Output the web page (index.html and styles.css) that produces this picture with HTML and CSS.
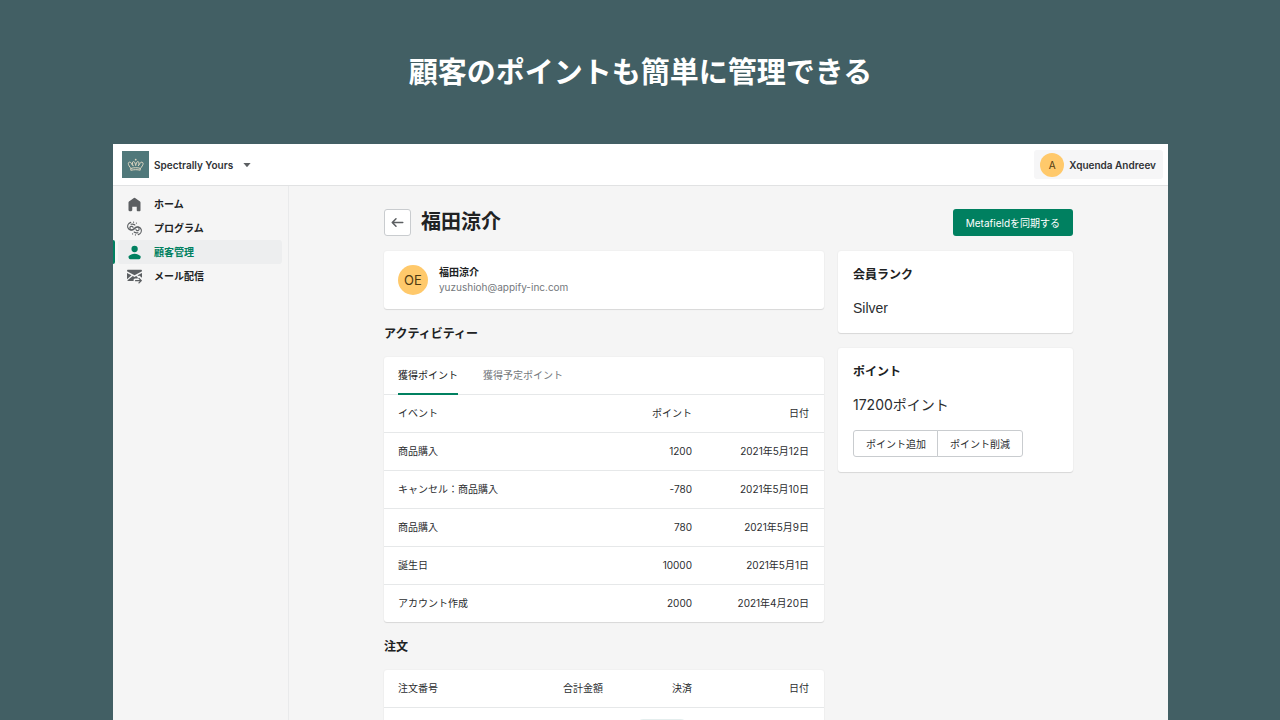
FILE: index.html
```html
<!DOCTYPE html>
<html lang="ja">
<head>
<meta charset="utf-8">
<title>顧客のポイントも簡単に管理できる</title>
<link rel="stylesheet" href="styles.css">
</head>
<body>
<div class="page">
  <h1 class="headline">顧客のポイントも簡単に管理できる</h1>
  <div class="window">
    <header class="topbar">
      <button class="shop" type="button">
        <svg class="shop-logo" viewBox="0 0 27 27" aria-hidden="true">
          <rect width="27" height="27" fill="#50787a"/>
          <g fill="none" stroke="#ddd6c1" stroke-width="1" stroke-linejoin="round" stroke-linecap="round">
            <path d="M9 17.500C7.500 15.500 6.300 14 6.300 12.600c0-1.800 2.300-2 3-.4.500 1.200.8 1.900 1.700 2.400M18.400 17.500c1.500-2 2.700-3.500 2.700-4.900 0-1.800-2.300-2-3-.4-.5 1.200-.8 1.900-1.700 2.400"/>
            <path d="M11 14.600c-1-2-.8-4 .5-4 1.400 0 1.700 2 2.200 4 .5-2 .8-4 2.200-4 1.300 0 1.500 2 .5 4"/>
            <path d="M9.200 17.300c2.800-.8 6.200-.8 9 0v1.900c-2.800-.7-6.200-.7-9 0z"/>
          </g>
          <g fill="#ddd6c1"><circle cx="13.700" cy="8.700" r=".9"/></g>
        </svg>
        <span>Spectrally Yours</span>
        <svg class="caret" viewBox="0 0 8 4" aria-hidden="true"><path d="M.4 0h7.200L4.400 3.700a.6.6 0 0 1-.8 0z" fill="#5c5f62"/></svg>
      </button>
      <button class="user" type="button">
        <span class="avatar avatar-small">A</span>
        <span>Xquenda Andreev</span>
      </button>
    </header>
    <div class="body">
      <nav class="sidebar">
        <a class="nav-item" href="#home">
          <svg class="icon" viewBox="0 0 20 20" aria-hidden="true"><path d="M18 7.261V17.500c0 .841-.672 1.500-1.500 1.500h-2c-.828 0-1.500-.659-1.500-1.500V13H7v4.477C7 18.318 6.328 19 5.500 19h-2c-.828 0-1.500-.682-1.500-1.523V7.261a1.500 1.500 0 0 1 .615-1.210l6.590-4.820a1.481 1.481 0 0 1 1.590 0l6.590 4.820A1.500 1.500 0 0 1 18 7.260z"/></svg>
          <span>ホーム</span>
        </a>
        <a class="nav-item" href="#program">
          <svg class="icon" viewBox="0 0 20 20" aria-hidden="true">
            <g fill="none" stroke="currentColor" stroke-width="1.500" stroke-linecap="round">
              <path d="M5 1.800C1.800 3 .2 6.200 1.200 9c1.300 3.600 5.800 4.400 8.300 1.800 1.600-1.700 3-3 5-2.400 2.200.7 2.300 3.700.2 4.400-1.400.4-2.600-.4-2.800-1.500"/>
              <path d="M15 18.200c3.200-1.200 4.800-4.400 3.800-7.200-1.300-3.600-5.800-4.400-8.300-1.800-1.600 1.700-3 3-5 2.400-2.200-.7-2.300-3.700-.2-4.400 1.400-.4 2.600.4 2.800 1.500"/>
              <path d="M5.500 4.400c1.800-.6 3.600-.3 5 .9M14.500 15.600c-1.800.6-3.600.3-5-.9"/>
              <path d="M8.700 1.500h.1M12.500 2.800h.1M11.200 18.500h.1M7.400 17.200h.1"/>
            </g>
          </svg>
          <span>プログラム</span>
        </a>
        <a class="nav-item is-active" href="#customers" aria-current="page">
          <svg class="icon" viewBox="0 0 20 20" aria-hidden="true"><path d="M14.363 5.220a4.220 4.220 0 1 1-8.439 0 4.220 4.220 0 0 1 8.439 0zM2.670 14.469c1.385-1.090 4.141-2.853 7.474-2.853 3.332 0 6.089 1.764 7.474 2.853.618.486.81 1.308.567 2.056l-.333 1.020A2.110 2.110 0 0 1 15.846 19H4.441a2.110 2.110 0 0 1-2.005-1.455l-.333-1.020c-.245-.748-.052-1.570.567-2.056z"/></svg>
          <span>顧客管理</span>
        </a>
        <a class="nav-item" href="#mail">
          <svg class="icon" viewBox="0 0 20 20" aria-hidden="true">
            <path d="M0 2.500C0 1.700.7 1 1.500 1h17c.8 0 1.500.7 1.500 1.500v.4L10 8.300 0 2.900z"/>
            <path d="M0 5.200l6 3.200-6 5.400zM7.700 9.300l2.300 1.200 2.300-1.200 2 1.700v1.500h-3.500c-1.300 0-2 1-2 2V16H1.500c-.5 0-.9-.2-1.200-.6zM20 5.200v6.300l-2.500-2c-.8-.6-1.800-.6-2.500-.1l-1-1z"/>
            <path d="M11.500 15.500h7M16 12.500l3 3-3 3" fill="none" stroke="currentColor" stroke-width="1.800" stroke-linecap="round" stroke-linejoin="round"/>
          </svg>
          <span>メール配信</span>
        </a>
      </nav>
      <main class="main">
        <div class="page-head">
          <button class="back" type="button" aria-label="戻る">
            <svg class="icon" viewBox="0 0 20 20" aria-hidden="true"><path d="M17 9H5.414l3.293-3.293a.999.999 0 1 0-1.414-1.414l-5 5a.999.999 0 0 0 0 1.414l5 5a.997.997 0 0 0 1.414 0 .999.999 0 0 0 0-1.414L5.414 11H17a1 1 0 1 0 0-2z"/></svg>
          </button>
          <h2 class="page-title">福田涼介</h2>
          <button class="primary" type="button">Metafieldを同期する</button>
        </div>
        <div class="columns">
          <div class="column-main">
            <section class="card customer">
              <span class="avatar avatar-large">OE</span>
              <div>
                <div class="customer-name">福田涼介</div>
                <div class="customer-mail">yuzushioh@appify-inc.com</div>
              </div>
            </section>
            <h3 class="section-title">アクティビティー</h3>
            <section class="card">
              <div class="tabs" role="tablist">
                <button class="tab is-selected" type="button" role="tab" aria-selected="true">獲得ポイント</button>
                <button class="tab" type="button" role="tab" aria-selected="false">獲得予定ポイント</button>
              </div>
              <table class="table">
                <colgroup><col class="col-wide"><col class="col-points"><col class="col-date"></colgroup>
                <thead><tr><th>イベント</th><th>ポイント</th><th>日付</th></tr></thead>
                <tbody>
                  <tr><td>商品購入</td><td>1200</td><td>2021年5月12日</td></tr>
                  <tr><td>キャンセル：商品購入</td><td>-780</td><td>2021年5月10日</td></tr>
                  <tr><td>商品購入</td><td>780</td><td>2021年5月9日</td></tr>
                  <tr><td>誕生日</td><td>10000</td><td>2021年5月1日</td></tr>
                  <tr><td>アカウント作成</td><td>2000</td><td>2021年4月20日</td></tr>
                </tbody>
              </table>
            </section>
            <h3 class="section-title">注文</h3>
            <section class="card">
              <table class="table">
                <colgroup><col class="col-wide"><col class="col-total"><col class="col-pay"><col class="col-date"></colgroup>
                <thead><tr><th>注文番号</th><th>合計金額</th><th>決済</th><th>日付</th></tr></thead>
                <tbody><tr class="order"><td></td><td></td><td><span class="badge"></span></td><td></td></tr></tbody>
              </table>
            </section>
          </div>
          <aside class="column-side">
            <section class="card side-card">
              <h3 class="card-title">会員ランク</h3>
              <p class="figure rank">Silver</p>
            </section>
            <section class="card side-card">
              <h3 class="card-title">ポイント</h3>
              <p class="figure">17200ポイント</p>
              <div class="segmented">
                <button class="segment" type="button">ポイント追加</button>
                <button class="segment" type="button">ポイント削減</button>
              </div>
            </section>
          </aside>
        </div>
      </main>
    </div>
  </div>
</div>
</body>
</html>
```

FILE: styles.css
```css
* { box-sizing: border-box; }

body {
  margin: 0;
  background: #425f64;
  color: #2b2d2f;
  font-family: Inter, "Noto Sans CJK JP", sans-serif;
  font-size: 10px;
  line-height: 16px;
}

button {
  margin: 0;
  padding: 0;
  border: 0;
  background: none;
  color: inherit;
  font: inherit;
}

h1, h2, h3, p { margin: 0; }

.page {
  display: flex;
  flex-direction: column;
  height: 100vh;
  padding: 0 112px 0 113px;
  overflow: hidden;
}

.headline {
  flex: none;
  padding: 46px 0 50px;
  color: #fff;
  font-family: "Noto Sans CJK JP", sans-serif;
  font-size: 29px;
  font-weight: 700;
  line-height: 48px;
  text-align: center;
}

.window {
  display: flex;
  flex: 1;
  flex-direction: column;
  min-height: 0;
  background: #f5f5f5;
}

.topbar {
  display: flex;
  flex: none;
  align-items: center;
  justify-content: space-between;
  height: 42px;
  padding: 0 5px 0 9px;
  border-bottom: 1px solid #e1e2e3;
  background: #fff;
}

.shop, .user {
  display: flex;
  align-items: center;
  gap: 5px;
  color: #303235;
  font-weight: 600;
}

.shop-logo { width: 27px; height: 27px; }
.caret { width: 8px; height: 4px; margin-left: 5px; }

.user {
  height: 29px;
  padding: 0 7px 0 6px;
  border-radius: 3px;
  background: #f6f6f7;
}

.avatar {
  display: flex;
  flex: none;
  align-items: center;
  justify-content: center;
  border-radius: 50%;
  background: #ffc96b;
  color: #4f3a12;
  font-weight: 400;
}

.avatar-small { width: 24px; height: 24px; }
.avatar-large { width: 30px; height: 30px; font-size: 13px; }

.body { display: flex; flex: 1; min-height: 0; }

.sidebar {
  flex: none;
  width: 176px;
  padding-top: 6px;
  border-right: 1px solid #e9eaeb;
}

.nav-item {
  display: flex;
  align-items: center;
  gap: 12px;
  height: 24px;
  margin: 0 6px 0 5px;
  padding-left: 9px;
  border-radius: 3px;
  color: #202223;
  font-weight: 700;
  text-decoration: none;
}

.icon { width: 15px; height: 15px; fill: currentColor; color: #5c5f62; }

.nav-item.is-active {
  position: relative;
  background: #edeeef;
  color: #008060;
}

.nav-item.is-active .icon { color: #008060; }

.nav-item.is-active::before {
  content: "";
  position: absolute;
  top: 0;
  bottom: 0;
  left: -5px;
  width: 2px;
  border-radius: 0 2px 2px 0;
  background: #008060;
}

.main { flex: 1; min-width: 0; padding: 23px 95px 0; }

.page-head {
  display: flex;
  align-items: center;
  gap: 10px;
  margin-bottom: 15px;
}

.back {
  display: flex;
  align-items: center;
  justify-content: center;
  width: 27px;
  height: 27px;
  border: 1px solid #c9cccf;
  border-radius: 3px;
  background: #fff;
}

.page-title {
  flex: 1;
  color: #202223;
  font-size: 20px;
  font-weight: 700;
  line-height: 27px;
}

.primary {
  height: 27px;
  padding: 0 13px;
  border-radius: 3px;
  background: #008060;
  color: #fff;
}

.columns { display: flex; align-items: flex-start; gap: 14px; }
.column-main { flex: 440; min-width: 0; }
.column-side { display: grid; flex: 235; gap: 15px; min-width: 0; }

.card {
  border-radius: 3px;
  background: #fff;
  box-shadow: 0 0 2px rgba(23, 24, 24, 0.07), 0 1px 1px rgba(0, 0, 0, 0.1);
}

.customer {
  display: flex;
  align-items: center;
  gap: 11px;
  padding: 14px;
  line-height: 15px;
}

.customer-name { color: #202223; font-weight: 700; }
.customer-mail { color: #74787c; }

.section-title {
  padding: 17px 0 15px;
  color: #202223;
  font-size: 12px;
  font-weight: 700;
  line-height: 16px;
}

.tabs {
  display: flex;
  gap: 25px;
  height: 38px;
  padding: 0 14px;
  border-bottom: 1px solid #e6e8e9;
}

.tab {
  height: 38px;
  border-bottom: 2px solid transparent;
  color: #74787c;
}

.tab.is-selected { border-color: #008060; color: #202223; }

.table {
  width: 100%;
  border-collapse: collapse;
  table-layout: fixed;
}

.table th, .table td {
  height: 38px;
  padding: 0 15px 0 14px;
  border-bottom: 1px solid #e6e8e9;
  font-weight: 400;
  text-align: right;
}

.table th { height: 37px; }

.table th:first-child, .table td:first-child { text-align: left; }
.table tbody tr:last-child td { border-bottom: 0; }
.col-points { width: 120px; }
.col-total { width: 120px; }
.col-pay { width: 89px; }
.col-date { width: 117px; }

.table .order td { height: 42px; }

.badge {
  display: inline-block;
  width: 52px;
  height: 15px;
  border-radius: 8px;
  background: #e4eeee;
}

.order td:nth-child(3) { padding-right: 19px; }

.side-card { padding: 16px 15px 15px; }

.card-title {
  color: #202223;
  font-size: 12px;
  font-weight: 700;
  line-height: 16px;
}

.figure {
  margin-top: 15px;
  font-size: 14px;
  line-height: 20px;
}

.rank { font-family: "Liberation Sans", sans-serif; }

.segmented { display: flex; margin-top: 15px; }

.segment {
  height: 27px;
  padding: 0 12px;
  border: 1px solid #c9cccf;
  background: #fff;
}

.segment:first-child { padding-right: 11px; border-radius: 3px 0 0 3px; }
.segment:last-child { margin-left: -1px; border-radius: 0 3px 3px 0; }
```
